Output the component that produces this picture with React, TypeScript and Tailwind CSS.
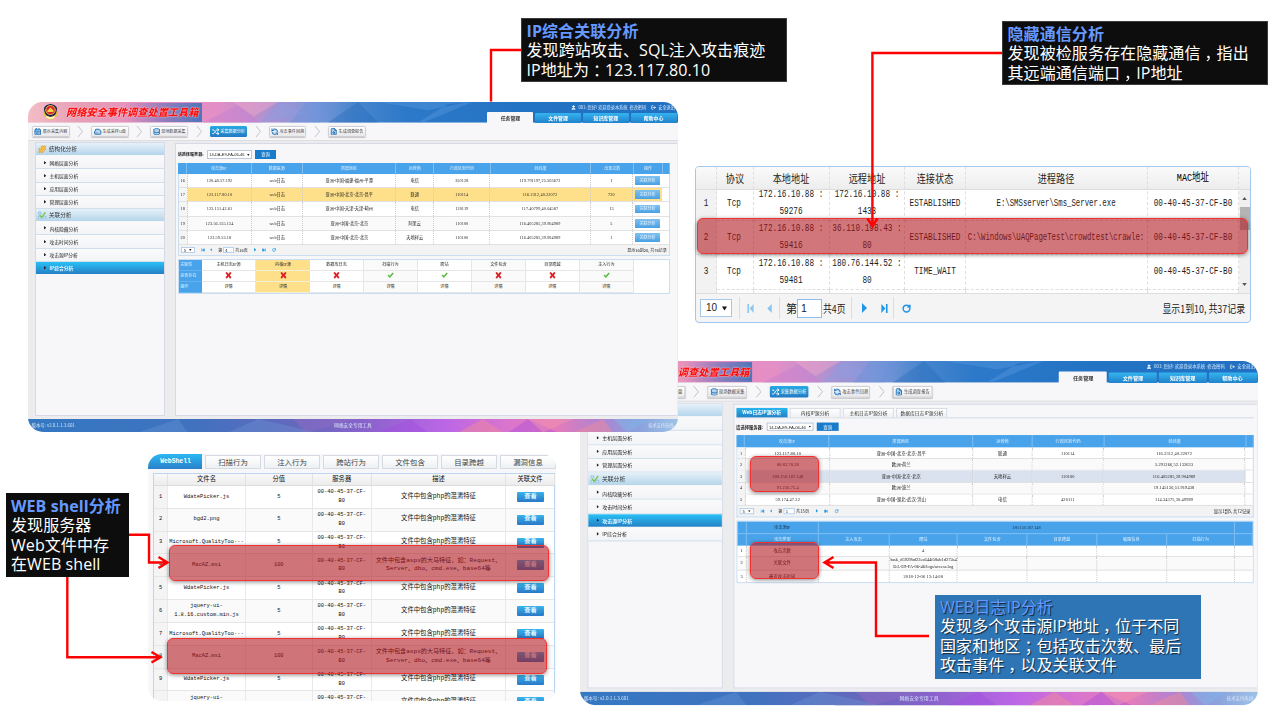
import React from 'react';
import {
  User, LogOut, CalendarDays, HardDrive, Database, Shuffle, RefreshCcw, FileSearch,
  Puzzle, SkipBack, SkipForward, RotateCw,
} from 'lucide-react';

/* ---------- shared pieces ---------- */

const Cross = () => (
  <svg viewBox="0 0 12 12" className="h-[6.5px] w-[7px]">
    <path d="M2 1.5 L10 10.5 M10 1.5 L2 10.5" stroke="#dc1f26" strokeWidth="3.4" />
    <path d="M1 10.8 H4 M8 10.8 H11 M1 1.4 H3.5 M8.5 1.4 H11" stroke="#c3161c" strokeWidth="1.6" />
  </svg>
);

const Check = () => (
  <svg viewBox="0 0 12 12" className="h-[6.5px] w-[7px]">
    <path d="M1.5 5.5 L4.8 9 L11 2" fill="none" stroke="#5dbb46" strokeWidth="2.8" />
  </svg>
);

const Caret = () => (
  <svg viewBox="0 0 6 5" className="h-[2px] w-[2.6px] shrink-0">
    <path d="M0 0 H6 L3 5 Z" fill="#222" />
  </svg>
);

const LowPoly = ({ footer = false }: { footer?: boolean }) => (
  <svg viewBox="0 0 650 20" preserveAspectRatio="none" className="absolute inset-0 h-full w-full">
    <defs>
      <linearGradient id="hd" x1="0" x2="1" y1="0" y2="0">
        <stop offset="0" stopColor="#f3bcc6" />
        <stop offset=".08" stopColor="#e79fb6" />
        <stop offset=".2" stopColor="#e88cbf" />
        <stop offset=".29" stopColor="#e38fc6" />
        <stop offset=".36" stopColor="#b591d0" />
        <stop offset=".44" stopColor="#7b98d8" />
        <stop offset=".5" stopColor="#4a86cd" />
        <stop offset=".58" stopColor="#2d79c9" />
        <stop offset=".75" stopColor="#2373c4" />
        <stop offset="1" stopColor="#2170c1" />
      </linearGradient>
      <linearGradient id="ft" x1="0" x2="1" y1="0" y2="0">
        <stop offset="0" stopColor="#3478c2" />
        <stop offset=".25" stopColor="#3f72bf" />
        <stop offset=".42" stopColor="#6668bd" />
        <stop offset=".52" stopColor="#8a62cc" />
        <stop offset=".64" stopColor="#bb66e6" />
        <stop offset=".74" stopColor="#da75cc" />
        <stop offset=".81" stopColor="#e67bb8" />
        <stop offset=".88" stopColor="#ae83d2" />
        <stop offset=".94" stopColor="#8ba2dc" />
        <stop offset="1" stopColor="#9dc3e8" />
      </linearGradient>
    </defs>
    <rect width="650" height="20" fill={footer ? 'url(#ft)' : 'url(#hd)'} />
    {footer ? (
      <g>
        <path d="M110 20 L150 0 L160 20Z M230 0 L290 20 L200 20Z" fill="#6fa0dc" opacity=".3" />
        <path d="M265 0 L330 0 L278 20Z" fill="#8f6cc4" opacity=".5" />
        <path d="M350 20 L382 0 L400 20Z M480 20 L500 0 L530 20Z" fill="#a24ce0" opacity=".4" />
        <path d="M455 0 L475 20 L430 20Z M545 20 L575 0 L585 20Z" fill="#f08a9c" opacity=".5" />
        <path d="M500 0 L545 0 L515 20Z" fill="#f59aae" opacity=".4" />
        <path d="M585 0 L620 0 L600 20Z" fill="#7fb4ea" opacity=".5" />
      </g>
    ) : (
      <g>
        <path d="M175 20 L210 3 L232 20Z" fill="#c77fd0" opacity=".5" />
        <path d="M205 0 L250 0 L226 14Z" fill="#f5a6c6" opacity=".45" />
        <path d="M232 20 L252 0 L280 12Z" fill="#8d9be0" opacity=".5" />
        <path d="M278 0 L310 0 L292 20 L262 20Z" fill="#6b8fdc" opacity=".35" />
        <path d="M300 20 L330 0 L350 20Z" fill="#1f66b8" opacity=".35" />
        <path d="M390 20 L420 2 L445 0 L395 20Z M350 0 L400 8 L440 0Z" fill="#5b9be0" opacity=".4" />
      </g>
    )}
  </svg>
);

const Emblem = () => (
  <svg viewBox="0 0 34 32" className="h-[16px] w-[17px] shrink-0">
    <path d="M3 10 Q0 25 10 29 L12 31 H22 L24 29 Q34 25 31 10" fill="#e9bf3f" />
    <path d="M17 0 Q27 1 30 8 Q30 18 25 23 L17 26 L9 23 Q4 18 4 8 Q7 1 17 0Z" fill="#16264f" />
    <ellipse cx="17" cy="12" rx="9.5" ry="9" fill="#d8242c" stroke="#f0c445" strokeWidth="1.8" />
    <path d="M11 13 L17 7 L23 13 V16 H11Z" fill="#f6cf4a" />
    <path d="M8 23 Q17 29 26 23 L25 28 Q17 32 9 28Z" fill="#fff3c4" />
  </svg>
);

const steps = [
  { label: '展示采集内容', Icon: CalendarDays },
  { label: '生成采样U盘', Icon: HardDrive },
  { label: '现场数据采集', Icon: Database },
  { label: '采集数据分析', Icon: Shuffle },
  { label: '攻击事件回溯', Icon: RefreshCcw },
  { label: '生成调查报告', Icon: FileSearch },
];

const menu = [
  { t: '结构化分析', head: true },
  { t: '网络层面分析' },
  { t: '主机层面分析' },
  { t: '应用层面分析' },
  { t: '管理层面分析' },
  { t: '关联分析', head: true },
  { t: '内核隐藏分析' },
  { t: '攻击时间分析' },
  { t: '攻击源IP分析' },
  { t: 'IP综合分析' },
];

/* Application frame: 650 x 330, enlarged by the caller where needed. */
const Shell = ({ active, compact = false, children }: { active: string; compact?: boolean; children: React.ReactNode }) => (
  <div className="flex h-[330px] w-[650px] flex-col overflow-hidden rounded-[15px] bg-[#ececee] font-['Liberation_Serif','Noto_Sans_CJK_SC',sans-serif] text-[4px] leading-[5px] text-[#222]">
    <header className="relative flex h-[20.5px] shrink-0 justify-between">
      <LowPoly />
      <div className={compact
        ? 'relative mt-px flex h-[18.5px] w-[165px] items-center gap-[5px] bg-linear-to-r from-transparent from-60% via-[#8b7dbd] via-82% to-[#4a76bb] pl-[13px]'
        : 'relative mt-px flex h-[18.5px] w-[174px] items-center gap-[7px] bg-linear-to-r from-transparent from-55% via-[#8b7dbd] via-80% to-[#4a76bb] pl-[14px]'}>
        <Emblem />
        <span className={compact
          ? "font-['Noto_Sans_CJK_SC',sans-serif] text-[9.8px] font-black italic leading-[16px] whitespace-nowrap text-[#f81214] [text-shadow:0_0_1px_#fff,0_0_1.5px_#fff8]"
          : "font-['Noto_Sans_CJK_SC',sans-serif] text-[10.2px] font-black italic leading-[16px] whitespace-nowrap text-[#f81214] [text-shadow:0_0_1px_#fff,0_0_1.5px_#fff8]"}>网络安全事件调查处置工具箱</span>
      </div>
      <div className="relative flex flex-col items-end justify-between">
        <div className="flex h-[9px] items-center pt-px pr-[3px] font-['Noto_Sans_CJK_SC',sans-serif] text-[4.2px] whitespace-nowrap text-[#d9e9fa]">
          <User className="mr-[2px] h-[5px] w-[5px] fill-white text-white" strokeWidth={3} />
          <span>001: 您好! 欢迎登录本系统</span>
          <span className="ml-[2px]">修改密码</span>
          <LogOut className="mr-[2px] ml-[5px] h-[5px] w-[5px] text-white" strokeWidth={3} />
          <span>安全退出</span>
        </div>
        <div className="flex gap-[1.7px] pr-[1.5px] font-['Noto_Sans_CJK_SC',sans-serif] text-[4.9px] font-bold">
          <div className="flex h-[10.5px] w-[46px] items-center justify-center rounded-t-[1px] bg-[#f7f7f9] text-[#333]">任务管理</div>
          {['文件管理', '知识库管理', '帮助中心'].map((t) => (
            <div key={t} className="flex h-[10px] w-[46px] items-center justify-center self-end rounded-t-[1px] bg-linear-to-b from-[#35b4ef] to-[#2182cb] text-white">{t}</div>
          ))}
        </div>
      </div>
    </header>

    <div className="flex h-[18px] shrink-0 items-center border-b border-[#dedee2] bg-[#f7f7f9] pt-px pl-[4px]">
      {steps.map(({ label, Icon }, i) => (
        <React.Fragment key={label}>
          {i > 0 && (
            <div className="flex w-[21.6px] justify-center">
              <svg viewBox="0 0 7 12" className="h-[11px] w-[6.5px]"><path d="M1 0 L6 6 L1 12" fill="none" stroke="#bdbdc4" strokeWidth="1" /></svg>
            </div>
          )}
          <div className={i === 3
            ? "flex h-[10.5px] w-[37.6px] items-center justify-center gap-[1px] rounded-[1.5px] bg-linear-to-b from-[#27a9e4] to-[#2379c2] font-['Noto_Sans_CJK_SC',sans-serif] text-[4.1px] whitespace-nowrap text-white"
            : "flex h-[10.5px] w-[37.6px] items-center justify-center gap-[1px] rounded-[1.5px] border-[0.5px] border-[#d0d0d4] bg-linear-to-b from-white to-[#e9e9ec] font-['Noto_Sans_CJK_SC',sans-serif] text-[4.1px] whitespace-nowrap text-[#444] shadow-[0_0.5px_1px_#0003]"}>
            <Icon className={i === 3 ? 'h-[7.5px] w-[7.5px] text-white' : 'h-[7.5px] w-[7.5px] fill-[#b5d4ee] text-[#2b76b8]'} strokeWidth={3} />
            {label}
          </div>
        </React.Fragment>
      ))}
    </div>

    <div className="flex min-h-0 flex-1 gap-[9.5px] pt-[2.5px] pb-[2.5px] pl-[6.5px]">
      <aside className="-mt-px flex w-[130.5px] shrink-0 flex-col border border-[#d5dae6] bg-[#f7f7f9] font-['Noto_Sans_CJK_SC',sans-serif]">
        {menu.map((m) =>
          m.head ? (
            <div key={m.t} className="flex h-[13.2px] items-center gap-[2.5px] border-b-[1.2px] border-[#f7f7f9] bg-linear-to-b from-[#e6f1f9] to-[#b5d5eb] pl-[2.5px] text-[5.6px] text-[#333]">
              {m.t === '结构化分析'
                ? <Puzzle className="h-[8.5px] w-[8.5px] fill-[#f3bb4e] text-[#e0a133]" strokeWidth={2} />
                : <svg viewBox="0 0 16 16" className="h-[8.5px] w-[8.5px]"><path d="M1 2 H6 V6 H1Z M10 10 H15 V15 H10Z M1 10 H6 V15 H1Z" fill="#cfe8f5" stroke="#6fb0d4" /><path d="M3 8 L7 12 L14 2" fill="none" stroke="#7cc142" strokeWidth="2.4" /></svg>}
              {m.t}
            </div>
          ) : (
            <div key={m.t} className={m.t === active
              ? 'flex h-[13.2px] items-center gap-[3.5px] border-b border-[#f7f7f9] bg-linear-to-b from-[#28c0f6] to-[#2480c4] pl-[8px] text-[4.8px] font-bold text-[#e6f5ff]'
              : 'flex h-[13.2px] items-center gap-[3.5px] border-b border-[#cfdfec] bg-linear-to-b from-[#fafafb] to-[#f3f4f7] pl-[8px] text-[4.8px] text-[#222]'}>
              <svg viewBox="0 0 4 6" className="h-[3.5px] w-[2.4px]"><path d="M0 0 L4 3 L0 6Z" fill="#222" /></svg>
              {m.t}
            </div>
          ),
        )}
      </aside>
      <main className="flex min-w-0 flex-1 flex-col border border-r-0 border-[#d5dae6] bg-[#f7f7f9] pl-[2.2px]">{children}</main>
      <div className="-ml-[9.5px] w-[1.5px] shrink-0" />
    </div>

    <footer className="relative flex h-[13.5px] shrink-0 items-center justify-between px-[3.5px] font-['Noto_Sans_CJK_SC',sans-serif] text-[4.7px] text-[#d9e6f7]">
      <LowPoly footer />
      <span className="relative w-[140px] text-[4.4px]">版本号: v2.0.1.1.3.601</span>
      <span className="relative">网络安全专用工具</span>
      <span className="relative w-[140px] text-right text-[4.2px]">技术支持热线:</span>
    </footer>
  </div>
);

const ServerPicker = () => (
  <div className="flex h-[9px] items-center font-['Noto_Sans_CJK_SC',sans-serif]">
    <span className="w-[29px] text-[4.1px] font-bold text-[#222]">请选择服务器:</span>
    <div className="flex h-[8.5px] w-[45.5px] items-center justify-between border-[0.5px] border-[#b8c9dc] bg-white px-[1.5px] font-['Liberation_Sans',sans-serif] text-[4px] whitespace-nowrap">
      14-DA-E9-FA-06-46 <Caret />
    </div>
    <div className="ml-[2.5px] flex h-[8.5px] w-[21.5px] items-center justify-center bg-[#197ccb] text-[4.3px] text-white">查询</div>
  </div>
);

const Pager = ({ page, total, info }: { page: string; total: string; info: string }) => (
  <div className="flex h-[11.3px] items-center border border-t-0 border-[#c9ddf3] bg-[#f3f3f4] pr-[2px] pl-[2px] font-['Noto_Sans_CJK_SC',sans-serif] text-[4px] whitespace-nowrap text-[#222]">
    <div className="flex h-[6.5px] w-[14px] items-center justify-between border-[0.5px] border-[#b8cfe6] bg-white px-[2px]">5 <Caret /></div>
    <SkipBack className="ml-[6px] h-[4px] w-[4px] fill-[#3da1e6] text-[#3da1e6]" strokeWidth={3} />
    <svg viewBox="0 0 4 6" className="ml-[5px] h-[3.5px] w-[2.5px]"><path d="M4 0 L0 3 L4 6Z" fill="#3da1e6" /></svg>
    <span className="ml-[6px]">第</span>
    <span className="ml-px flex h-[6.5px] w-[11px] items-center border-[0.5px] border-[#b8d3ee] bg-white pl-px">{page}</span>
    <span className="ml-px">共{total}页</span>
    <svg viewBox="0 0 4 6" className="ml-[6px] h-[3.5px] w-[2.5px]"><path d="M0 0 L4 3 L0 6Z" fill="#2196e8" /></svg>
    <SkipForward className="ml-[6px] h-[4px] w-[4px] fill-[#2196e8] text-[#2196e8]" strokeWidth={3} />
    <RotateCw className="ml-[6px] h-[4px] w-[4px] text-[#2196e8]" strokeWidth={3.5} />
    <span className="ml-auto text-[4.1px] tracking-[-0.06px]">{info}</span>
  </div>
);

const headCell = 'flex items-center justify-center border-r-[0.5px] border-[#7cbdf2] whitespace-nowrap';
const bodyCell = 'flex items-center justify-center border-r-[0.5px] border-dotted border-[#ccc] whitespace-nowrap';
const isAscii = (s: string) => /^[\x20-\x7e]*$/.test(s);
const Txt = ({ s }: { s: string }) => <span className={isAscii(s) ? 'text-[4.2px] tracking-[0.12px]' : 'text-[4.2px]'}>{s}</span>;

/* ---------- IP correlation window ---------- */

const ipCols = 'grid grid-cols-[9fr_65fr_51fr_93.5fr_38fr_56.5fr_100.5fr_43fr_28.5fr_7fr]';
const ipRows = [
  ['16', '120.40.57.192', 'web日志', '亚洲-中国-福建-福州-平潭', '电信', '350128', '119.791197,25.503672', '1'],
  ['17', '123.117.80.10', 'web日志', '亚洲-中国-北京-北京-昌平', '联通', '110114', '116.2312,40.22072', '730'],
  ['18', '123.151.42.61', 'web日志', '亚洲-中国-天津-天津-蓟州', '电信', '120119', '117.40799,40.04587', '13'],
  ['19', '123.56.155.154', 'web日志', '亚洲-中国-北京-北京', '阿里云', '110100', '116.405285,39.904989', '5'],
  ['20', '123.59.53.18', 'web日志', '亚洲-中国-北京-北京', '天地祥云', '110100', '116.405285,39.904989', '1'],
];
const relCols = 'grid grid-cols-[23.5fr_54.2fr_54.2fr_54.2fr_54.2fr_54.2fr_54.2fr_54.2fr_54.2fr_35fr]';
const relHead = ['主机日志IP源', '内核IP源', '数据库日志', '扫描行为', '跨站', '文件包含', '目录跨越', '注入行为'];
const relOk = [false, false, false, true, true, false, false, true];

const relCell = (i: number) => {
  if (i === 1) return 'flex items-center justify-center border-b-[0.5px] border-[#f5efd8] bg-[#fee08a]';
  if (i % 2) return 'flex items-center justify-center border-r-[0.5px] border-b-[0.5px] border-[#e6e6e6] bg-[#fafafa]';
  return 'flex items-center justify-center border-r-[0.5px] border-b-[0.5px] border-[#e6e6e6] bg-white';
};

const IpWindow = () => (
  <Shell active="IP综合分析">
    <div className="w-[492px] pt-[6px]">
      <ServerPicker />
      <div className={`${ipCols} mt-[4px] h-[11px] bg-[#49a3ea] text-[4px] text-[#dff0ff]`}>
        {['', '攻击源IP', '数据来源', '所属地区', '运营商', '行政区划代码', '经纬度', '出现次数', '操作', ''].map((h, i) => (
          <div key={i} className={headCell}>{h}</div>
        ))}
      </div>
      <div className="border-x border-[#c9ddf3] bg-white">
        {ipRows.map((r, ri) => (
          <div key={r[0]} className={`${ipCols} h-[14.2px] border-b-[0.5px] border-[#e2e2e2]`}>
            {r.map((c, i) => (
              <div key={i} className={ri === 1 && i > 0 ? `${bodyCell} bg-[#fee08a]` : i === 0 ? `${bodyCell} bg-[#f5f5f6]` : ri % 2 ? `${bodyCell} bg-[#fafafa]` : bodyCell}><Txt s={c} /></div>
            ))}
            <div className={ri === 1 ? 'flex items-center justify-center bg-[#fee08a]' : 'flex items-center justify-center'}>
              <span className="flex h-[8.8px] w-[25px] items-center justify-center rounded-[0.5px] bg-linear-to-b from-[#7cc1f0] to-[#4aa0e2] text-[4px] whitespace-nowrap text-[#e9f5ff]">关联分析</span>
            </div>
            <div className="bg-white" />
          </div>
        ))}
      </div>
      <Pager page="4" total="16" info="显示16到20, 共76记录" />

      <div className="mt-[2.5px] border border-[#c9ddf3] bg-white text-[4.1px] text-[#222]">
        {[0, 1, 2].map((row) => (
          <div key={row} className={`${relCols} h-[11px]`}>
            <div className="flex items-center border-b-[0.5px] border-[#66b3ee] bg-[#49a3ea] pl-[1.5px] text-[#dff0ff]">{['关联性', '是否存在', '操作'][row]}</div>
            {relHead.map((h, i) => (
              <div key={h} className={relCell(i)}>{row === 0 ? h : row === 1 ? (relOk[i] ? <Check /> : <Cross />) : '详情'}</div>
            ))}
            <div />
          </div>
        ))}
      </div>
    </div>
  </Shell>
);

/* ---------- web log IP window ---------- */

const logCols = 'grid grid-cols-[9fr_84.5fr_143fr_60fr_71fr_142fr_7fr]';
const logRows = [
  ['1', '123.117.80.10', '亚洲-中国-北京-北京-昌平', '联通', '110114', '116.2312,40.22072'],
  ['2', '80.82.78.38', '欧洲-荷兰', '', '', '5.291266,52.132633'],
  ['3', '180.150.187.148', '亚洲-中国-北京-北京', '天地祥云', '110100', '116.405285,39.904989'],
  ['4', '91.236.75.4', '欧洲-波兰', '', '', '19.145136,51.919438'],
  ['5', '59.174.47.32', '亚洲-中国-湖北-武汉-洪山', '电信', '420111', '114.34375,30.49989'],
];
const atkCols = 'grid grid-cols-[10fr_71.5fr_71.5fr_68.5fr_70fr_69.5fr_70fr_69fr_17fr]';

const LogWindow = () => (
  <Shell active="攻击源IP分析" compact>
    <div className="w-[496px] pt-[3.5px]">
      <div className="flex h-[9.7px] items-end gap-[2.2px] border-b border-[#d4dae4] font-['Noto_Sans_CJK_SC',sans-serif] text-[4.6px] whitespace-nowrap">
        <div className="flex h-[9.4px] w-[49px] items-center justify-center bg-linear-to-b from-[#27b5ef] to-[#2380c6] font-bold text-white">Web日志IP源分析</div>
        {['内核IP源分析', '主机日志IP源分析', '数据库日志IP源分析'].map((t) => (
          <div key={t} className="flex h-[8.8px] w-[49px] items-center justify-center border border-b-0 border-[#d9dee6] bg-linear-to-b from-white to-[#eef0f3] text-[#333]">{t}</div>
        ))}
      </div>
      <div className="mt-[3.5px]"><ServerPicker /></div>
      <div className={`${logCols} mt-[3.5px] h-[11.8px] bg-[#49a3ea] text-[4px] text-[#dff0ff]`}>
        {['', '攻击源IP', '所属地区', '运营商', '行政区划代码', '经纬度', ''].map((h, i) => (
          <div key={i} className={headCell}>{h}</div>
        ))}
      </div>
      <div className="border-x border-[#c9ddf3] bg-white">
        {logRows.map((r, ri) => (
          <div key={r[0]} className={`${logCols} h-[11.2px] border-b-[0.5px] border-[#e2e2e2]`}>
            {r.map((c, i) => (
              <div key={i} className={i === 0 ? `${bodyCell} bg-[#f5f5f6]` : ri === 2 ? `${bodyCell} bg-[#d9e2ee]` : ri % 2 ? `${bodyCell} bg-[#fafafa]` : bodyCell}><Txt s={c} /></div>
            ))}
            <div />
          </div>
        ))}
      </div>
      <Pager page="1" total="15" info="显示1到5, 共72记录" />

      <div className="mt-[2.5px] border border-[#c9ddf3] bg-white text-[4px]">
        <div className="grid h-[11px] grid-cols-[10fr_71.5fr_418.5fr_17fr] bg-[#49a3ea] text-[#16324d]">
          <div className={headCell} />
          <div className={headCell}>攻击源IP</div>
          <div className={headCell}>180.150.187.148</div>
          <div />
        </div>
        <div className={`${atkCols} h-[11.8px] border-t-[0.5px] border-[#7cbdf2] bg-[#49a3ea] text-[#dff0ff]`}>
          {['', '攻击类型', '注入攻击', '跨站', '文件包含', '目录跨越', '敏感信息', '扫描行为', ''].map((h, i) => (
            <div key={i} className={headCell}>{h}</div>
          ))}
        </div>
        <div className={`${atkCols} h-[11px] border-b-[0.5px] border-[#e2e2e2]`}>
          {['1', '攻击次数', '', '4', '', '', '', ''].map((c, i) => <div key={i} className={bodyCell}><Txt s={c} /></div>)}
        </div>
        <div className={`${atkCols} h-[13.2px] border-b-[0.5px] border-[#e2e2e2] bg-[#fafafa]`}>
          <div className={bodyCell}><Txt s="2" /></div>
          <div className={bodyCell}><Txt s="关联文件" /></div>
          <div className={bodyCell} />
          <div className={`${bodyCell} flex-col text-[4.3px] leading-[5.6px]`}>
            <span>/task_d5929bd22ea644f58ab1d272a4</span>
            <span>DA-E9-FA-06-46/logs/access.log</span>
          </div>
          <div className={bodyCell} /><div className={bodyCell} /><div className={bodyCell} /><div className={bodyCell} />
        </div>
        <div className={`${atkCols} h-[10.8px]`}>
          {['3', '最近攻击时间', '', '2018-12-06 13:14:08', '', '', '', ''].map((c, i) => <div key={i} className={bodyCell}><Txt s={c} /></div>)}
        </div>
      </div>
    </div>
  </Shell>
);

/* ---------- hidden communication table ---------- */

const commCols = 'grid grid-cols-[20.5px_37px_76px_75.5px_60.5px_182.5px_91px]';
const narrowText = "inline-block font-['Liberation_Mono','Noto_Sans_CJK_SC',sans-serif] text-[10px] leading-[17px] whitespace-pre text-[#1c1c1c]";
const Narrow = ({ children }: { children: React.ReactNode }) => (
  <span className={`${narrowText} scale-x-[0.77]`}>{children}</span>
);
const commRows = [
  ['1', 'Tcp', '172.16.10.88 :', '59276', '172.16.10.88 :', '1433', 'ESTABLISHED', 'E:\\SMSserver\\Sms_Server.exe', '00-40-45-37-CF-B0'],
  ['2', 'Tcp', '172.16.10.88 :', '59416', '36.110.198.43 :', '80', 'ESTABLISHED', 'C:\\Windows\\UAQPageTest\\crowdtest\\crawle:', '00-40-45-37-CF-B0'],
  ['3', 'Tcp', '172.16.10.88 :', '59481', '180.76.144.52 :', '80', 'TIME_WAIT', '', '00-40-45-37-CF-B0'],
];
const commCell = 'flex flex-col items-center justify-center border-r border-b border-dashed border-[#dedede]';

const CommTable = () => (
  <div className="flex h-[157px] w-[556px] flex-col overflow-hidden rounded-[4px] border border-[#a3c8ef] bg-[#f4f4f4] font-['Noto_Sans_CJK_SC',sans-serif]">
    <div className={`${commCols} h-[23px] shrink-0 border-b border-[#ddd] bg-linear-to-b from-[#fafafa] to-[#ededed]`}>
      {['', '协议', '本地地址', '远程地址', '连接状态', '进程路径'].map((h, i) => (
        <div key={i} className="flex items-center justify-center border-r border-dashed border-[#dedede] text-[11px] leading-[14px] whitespace-nowrap text-[#222]"><span className="inline-block scale-x-[0.83]">{h}</span></div>
      ))}
      <div className="flex items-center justify-center border-r border-dashed border-[#dedede] whitespace-nowrap"><span className="inline-block scale-x-[0.77] font-['Liberation_Mono','Noto_Sans_CJK_SC',sans-serif] text-[11px] leading-[14px]">MAC地址</span></div>
    </div>
    <div className="flex h-[103px] shrink-0 overflow-hidden">
      <div className="-mt-[4px] w-[543px] shrink-0 bg-white">
        {commRows.map((r, ri) => (
          <div key={ri} className={`${commCols} h-[34.3px]`}>
            <div className={`${commCell} bg-[#f2f2f2]`}><Narrow>{r[0]}</Narrow></div>
            <div className={commCell}><Narrow>{r[1]}</Narrow></div>
            <div className={commCell}><Narrow>{r[2]}</Narrow><Narrow>{r[3]}</Narrow></div>
            <div className={commCell}><Narrow>{r[4]}</Narrow><Narrow>{r[5]}</Narrow></div>
            <div className={commCell}><Narrow>{r[6]}</Narrow></div>
            <div className={commCell}><span className={`${narrowText} scale-x-[0.735]`}>{r[7]}</span></div>
            <div className={commCell}><Narrow>{r[8]}</Narrow></div>
          </div>
        ))}
        <div className={`${commCols} h-[6px]`}>
          {[0, 1, 2, 3, 4, 5, 6].map((i) => <div key={i} className={i === 0 ? 'border-r border-dashed border-[#dedede] bg-[#f2f2f2]' : 'border-r border-dashed border-[#dedede]'} />)}
        </div>
      </div>
      <div className="flex w-[11px] flex-col items-center bg-[#f0f0f0]">
        <svg viewBox="0 0 6 4" className="mt-[7px] h-[3px] w-[5px] shrink-0"><path d="M3 0 L6 4 H0Z" fill="#555" /></svg>
        <div className="mt-[7px] h-[23px] w-[10px] bg-[#b4b4b4]" />
        <svg viewBox="0 0 6 4" className="mt-auto mb-[7px] h-[3px] w-[5px] shrink-0"><path d="M0 0 H6 L3 4Z" fill="#555" /></svg>
      </div>
    </div>
    <div className="flex flex-1 items-center border-t border-[#ddd] pr-[5px] pl-[4px] text-[11px] leading-[14px] text-[#222]">
      <div className="flex h-[18px] w-[32px] items-center justify-between border border-[#a9c8e8] bg-white pr-[4px] pl-[5px]"><span className="font-['Liberation_Sans',sans-serif] text-[10px]">10</span><svg viewBox="0 0 6 5" className="h-[5px] w-[5px]"><path d="M0 0 H6 L3 5Z" fill="#111" /></svg></div>
      <span className="ml-[7px] h-[22px] w-px bg-[#ddd]" />
      <svg viewBox="0 0 7 10" className="ml-[7px] h-[9px] w-[7px]"><path d="M1 0 V10" stroke="#8cc6ee" strokeWidth="1.8" /><path d="M7 0 L2.5 5 L7 10Z" fill="#8cc6ee" /></svg>
      <svg viewBox="0 0 5 10" className="ml-[13px] h-[9px] w-[5px]"><path d="M5 0 L0 5 L5 10Z" fill="#8cc6ee" /></svg>
      <span className="ml-[7px] h-[22px] w-px bg-[#ddd]" />
      <span className="ml-[6px] w-[11px]">第</span>
      <span className="flex h-[19px] w-[25px] items-center border border-[#8fbdf0] bg-white pl-[3px] font-['Liberation_Sans',sans-serif] text-[10.5px]">1</span>
      <span className="ml-[1px] inline-block w-[26px] whitespace-nowrap"><span className="inline-block origin-left scale-x-[0.8]">共4页</span></span>
      <span className="ml-[2px] h-[22px] w-px bg-[#ddd]" />
      <svg viewBox="0 0 5 10" className="ml-[10px] h-[10px] w-[5px]"><path d="M0 0 L5 5 L0 10Z" fill="#1e96ea" /></svg>
      <svg viewBox="0 0 7 10" className="ml-[14px] h-[9px] w-[7px]"><path d="M6 0 V10" stroke="#1e96ea" strokeWidth="1.8" /><path d="M0 0 L4.5 5 L0 10Z" fill="#1e96ea" /></svg>
      <span className="ml-[5px] h-[22px] w-px bg-[#ddd]" />
      <RotateCw className="ml-[8px] h-[9px] w-[9px] text-[#1e96ea]" strokeWidth={4} />
      <span className="ml-auto inline-block origin-right scale-x-[0.81] whitespace-nowrap">显示1到10, 共37记录</span>
    </div>
  </div>
);

/* ---------- web shell table ---------- */

const shellCols = 'grid grid-cols-[14px_78px_66.5px_59.5px_134px_49px]';
const php = ['文件中包含php的混淆特征'];
const asp = ['文件中包含aspx的大马特征，如：Request、', 'Server、dbo、cmd.exe、base64等'];
const shellRows: { n: string[]; s: string; d: string[] }[] = [
  { n: ['WdatePicker.js'], s: '5', d: php },
  { n: ['bgd2.png'], s: '5', d: php },
  { n: ['Microsoft.QualityToo···'], s: '5', d: php },
  { n: ['MacAZ.msi'], s: '100', d: asp },
  { n: ['WdatePicker.js'], s: '5', d: php },
  { n: ['jquery-ui-', '1.8.16.custom.min.js'], s: '5', d: php },
  { n: ['Microsoft.QualityToo···'], s: '5', d: php },
  { n: ['MacAZ.msi'], s: '100', d: asp },
  { n: ['WdatePicker.js'], s: '5', d: php },
  { n: ['jquery-ui-', '1.8.16.custom.min.js'], s: '5', d: php },
];
const shellCell = 'flex flex-col items-center justify-center border-r border-[#e9e9ea]';

const ShellTable = () => (
  <div className="flex h-[247px] w-[408px] flex-col overflow-hidden rounded-[14px] bg-[#f7f7fa] font-['Liberation_Mono','Noto_Sans_CJK_SC',sans-serif] text-[#111]">
    <div className="flex h-[14.5px] shrink-0 items-end gap-[3px] font-['Noto_Sans_CJK_SC',sans-serif] text-[7.4px] leading-[10px]">
      <div className="flex h-[14.5px] w-[55px] items-center justify-center bg-linear-to-b from-[#2ab9f2] to-[#2a7fca] pt-px pl-[1px] font-['Liberation_Mono',monospace] text-[6.4px] font-bold text-white">WebShell</div>
      {['扫描行为', '注入行为', '跨站行为', '文件包含', '目录跨越', '漏洞信息'].map((t) => (
        <div key={t} className="flex h-[13.5px] w-[56px] shrink-0 items-center justify-center border border-[#d5dbe0] bg-linear-to-b from-white to-[#edf1f3] text-[#444]">{t}</div>
      ))}
    </div>
    <div className="mt-[4px] ml-[5px] w-[402px] border border-[#bdd6f0] bg-white">
      <div className={`${shellCols} h-[12.5px] border-b border-[#ddd] bg-linear-to-b from-[#f9f9f9] to-[#ececec] font-['Noto_Sans_CJK_SC',sans-serif] text-[6.3px] leading-[8px]`}>
        {['', '文件名', '分值', '服务器', '描述', '关联文件'].map((h, i) => <div key={i} className="flex items-center justify-center border-r border-[#e2e2e2]">{h}</div>)}
      </div>
      {shellRows.map((r, i) => (
        <div key={i} className={i % 2 ? `${shellCols} h-[22.83px] border-b border-[#e6e6e6] bg-[#fafafa] text-[5.4px] leading-[8.6px]` : `${shellCols} h-[22.83px] border-b border-[#e6e6e6] text-[5.4px] leading-[8.6px]`}>
          <div className={`${shellCell} bg-[#f4f4f5]`}>{i < 9 ? i + 1 : ''}</div>
          <div className={`${shellCell} whitespace-nowrap`}>{r.n.map((l) => <span key={l}>{l}</span>)}</div>
          <div className={shellCell}>{i < 9 ? r.s : ''}</div>
          <div className={`${shellCell} whitespace-nowrap`}><span>00-40-45-37-CF-</span><span>B0</span></div>
          <div className={`${shellCell} whitespace-nowrap`}>
            {r.d.map((l) => <span key={l} className={r.d.length > 1 ? 'text-[6.1px]' : 'text-[6.35px]'}>{l}</span>)}
          </div>
          <div className="flex items-center justify-center">
            <span className="flex h-[10px] w-[27px] items-center justify-center rounded-[1px] bg-linear-to-b from-[#38b3ea] to-[#2a78c6] text-[6.2px] font-bold text-[#e3f3ff]">查看</span>
          </div>
        </div>
      ))}
    </div>
  </div>
);

/* ---------- callouts ---------- */

/* Full-width colon, comma and semicolon are nudged to the middle of their square. */
const Centered = ({ text }: { text: string }) => (
  <>
    {text.split(/([：，；])/).map((p, i) => (
      i % 2 ? <span key={i} className="relative left-[4px]">{p}</span> : <React.Fragment key={i}>{p}</React.Fragment>
    ))}
  </>
);

const Callout = ({ title, lines, bold = true }: { title: string; lines: string[]; bold?: boolean }) => (
  <div className="font-['Open_Sans','Noto_Sans_CJK_SC',sans-serif] text-[16px] leading-[19.3px] tracking-[0.08px] whitespace-nowrap text-white">
    <div className={bold ? 'font-bold text-[#6699ff]' : 'text-[#6699ff]'}>{title}</div>
    {lines.map((l) => <div key={l}><Centered text={l} /></div>)}
  </div>
);

const mark = 'absolute rounded-[6px] border-[1.5px] border-[#f5302f] bg-[#af141e]/58 shadow-[0_1px_4px_#0007]';

export default function App() {
  return (
    <div className="relative h-[706px] w-[1269px] overflow-hidden bg-white">
      <div className="absolute top-[361px] left-[580px] origin-top-left scale-[1.043]"><LogWindow /></div>
      <div className="absolute top-[102px] left-[28px]"><IpWindow /></div>
      <div className="absolute top-[166px] left-[695px]"><CommTable /></div>
      <div className="absolute top-[454px] left-[148px]"><ShellTable /></div>

      <div className={`${mark} top-[218px] left-[697px] h-[36px] w-[551px]`} />
      <div className={`${mark} top-[544.5px] left-[169px] h-[36px] w-[380px]`} />
      <div className={`${mark} top-[638px] left-[167px] h-[36px] w-[380px]`} />
      <div className={`${mark} top-[456px] left-[750px] h-[36px] w-[69px]`} />
      <div className={`${mark} top-[542px] left-[750px] h-[37px] w-[69px]`} />

      <svg viewBox="0 0 1269 706" className="absolute inset-0 h-[706px] w-[1269px]" fill="none" stroke="#fe0000" strokeWidth="2.4">
        <path d="M522 50 H491 V101.5" />
        <path d="M1002 53 H872.4 V225 M867.5 218.5 L872.4 226 L877.5 218.5" />
        <path d="M128 534.7 H149 V562.5 H167 M158.5 557 L167.5 562.5 L158.5 568" />
        <path d="M67.3 576 V657.3 H160 M151.5 652 L160.5 657.3 L151.5 662.5" />
        <path d="M929 636 H876 V562.5 H825 M833.5 557 L824.5 562.5 L833.5 568" />
      </svg>

      <div className="absolute top-[18px] left-[521px] h-[64px] w-[266px] border border-[#3c3c3c] bg-[#0d0d0d] pt-[3px] pl-[4.5px]">
        <Callout title="IP综合关联分析" lines={['发现跨站攻击、SQL注入攻击痕迹', 'IP地址为：123.117.80.10']} />
      </div>
      <div className="absolute top-[21px] left-[1002px] h-[64px] w-[266px] border border-[#3c3c3c] bg-[#0d0d0d] pt-[3px] pl-[4.5px]">
        <Callout title="隐藏通信分析" lines={['发现被检服务存在隐藏通信，指出', '其远端通信端口，IP地址']} />
      </div>
      <div className="absolute top-[493px] left-[6px] h-[84px] w-[123px] bg-[#0d0d0d] pt-[4px] pl-[5px]">
        <Callout title="WEB shell分析" lines={['发现服务器', 'Web文件中存', '在WEB shell']} />
      </div>
      <div className="absolute top-[595px] left-[935px] h-[83.5px] w-[265.5px] bg-[#2e75b6] pt-[3px] pl-[5px] [text-shadow:1px_1px_1px_#123]">
        <Callout bold={false} title="WEB日志IP分析" lines={['发现多个攻击源IP地址，位于不同', '国家和地区；包括攻击次数、最后', '攻击事件，以及关联文件']} />
      </div>
    </div>
  );
}
